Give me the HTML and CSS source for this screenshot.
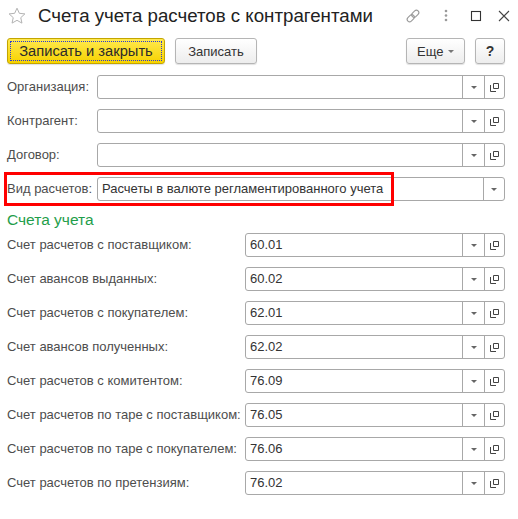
FILE: index.html
```html
<!DOCTYPE html>
<html lang="ru">
<head>
<meta charset="utf-8">
<title>Счета учета расчетов с контрагентами</title>
<link rel="stylesheet" href="styles.css">
</head>
<body>
<div class="window">
  <div class="titlebar">
    <svg class="star" width="18" height="18" viewBox="0 0 18 18"><path d="M9 1.2l2.35 5.1 5.55.6-4.15 3.75 1.2 5.45L9 13.3l-4.95 2.8 1.2-5.45L1.1 6.9l5.55-.6z" fill="none" stroke="#b3b3b3" stroke-width="1" stroke-linejoin="round"/></svg>
    <div class="title">Счета учета расчетов с контрагентами</div>
    <div class="title-icons">
      <svg class="ti-link" width="16" height="16" viewBox="0 0 16 16"><g transform="rotate(-45 8 8)" fill="none" stroke="#9a9a9a" stroke-width="1.1"><rect x="0.8" y="5.6" width="8" height="4.8" rx="2.4"/><rect x="7.2" y="5.6" width="8" height="4.8" rx="2.4"/></g></svg>
      <svg class="ti-dots" width="6" height="16" viewBox="0 0 6 16"><circle cx="3" cy="3" r="1.3" fill="#9a9a9a"/><circle cx="3" cy="7.5" r="1.3" fill="#9a9a9a"/><circle cx="3" cy="12" r="1.3" fill="#9a9a9a"/></svg>
      <svg class="ti-max" width="12" height="12" viewBox="0 0 12 12"><rect x="1.5" y="1.5" width="9" height="9" fill="none" stroke="#333" stroke-width="1.1"/></svg>
      <svg class="ti-close" width="12" height="12" viewBox="0 0 12 12"><path d="M1 1L11 11M11 1L1 11" stroke="#444" stroke-width="1.1"/></svg>
    </div>
  </div>

  <div class="toolbar">
    <button class="btn btn-primary"><span class="focus">Записать и закрыть</span></button>
    <button class="btn btn-save">Записать</button>
    <div class="spacer"></div>
    <button class="btn btn-more">Еще <i class="caret"></i></button>
    <button class="btn btn-help">?</button>
  </div>

  <div class="form">
    <div class="row">
      <div class="lbl lbl-top">Организация:</div>
      <div class="field field-top"><div class="val"></div><div class="dd"><i class="arrow"></i></div><div class="open"><svg width="9" height="9" viewBox="0 0 9 9"><path d="M3.5 0.5h5v5h-5z" fill="none" stroke="#444"/><path d="M0.5 2v6.5H6" fill="none" stroke="#444"/></svg></div></div>
    </div>
    <div class="row">
      <div class="lbl lbl-top">Контрагент:</div>
      <div class="field field-top"><div class="val"></div><div class="dd"><i class="arrow"></i></div><div class="open"><svg width="9" height="9" viewBox="0 0 9 9"><path d="M3.5 0.5h5v5h-5z" fill="none" stroke="#444"/><path d="M0.5 2v6.5H6" fill="none" stroke="#444"/></svg></div></div>
    </div>
    <div class="row">
      <div class="lbl lbl-top">Договор:</div>
      <div class="field field-top"><div class="val"></div><div class="dd"><i class="arrow"></i></div><div class="open"><svg width="9" height="9" viewBox="0 0 9 9"><path d="M3.5 0.5h5v5h-5z" fill="none" stroke="#444"/><path d="M0.5 2v6.5H6" fill="none" stroke="#444"/></svg></div></div>
    </div>
    <div class="row row-mark">
      <div class="lbl lbl-top">Вид расчетов:</div>
      <div class="field field-top"><div class="val">Расчеты в валюте регламентированного учета</div><div class="dd dd-last"><i class="arrow"></i></div></div>
      <div class="mark"></div>
    </div>

    <div class="section">Счета учета</div>

    <div class="row">
      <div class="lbl lbl-acc">Счет расчетов с поставщиком:</div>
      <div class="field field-acc"><div class="val">60.01</div><div class="dd"><i class="arrow"></i></div><div class="open"><svg width="9" height="9" viewBox="0 0 9 9"><path d="M3.5 0.5h5v5h-5z" fill="none" stroke="#444"/><path d="M0.5 2v6.5H6" fill="none" stroke="#444"/></svg></div></div>
    </div>
    <div class="row">
      <div class="lbl lbl-acc">Счет авансов выданных:</div>
      <div class="field field-acc"><div class="val">60.02</div><div class="dd"><i class="arrow"></i></div><div class="open"><svg width="9" height="9" viewBox="0 0 9 9"><path d="M3.5 0.5h5v5h-5z" fill="none" stroke="#444"/><path d="M0.5 2v6.5H6" fill="none" stroke="#444"/></svg></div></div>
    </div>
    <div class="row">
      <div class="lbl lbl-acc">Счет расчетов с покупателем:</div>
      <div class="field field-acc"><div class="val">62.01</div><div class="dd"><i class="arrow"></i></div><div class="open"><svg width="9" height="9" viewBox="0 0 9 9"><path d="M3.5 0.5h5v5h-5z" fill="none" stroke="#444"/><path d="M0.5 2v6.5H6" fill="none" stroke="#444"/></svg></div></div>
    </div>
    <div class="row">
      <div class="lbl lbl-acc">Счет авансов полученных:</div>
      <div class="field field-acc"><div class="val">62.02</div><div class="dd"><i class="arrow"></i></div><div class="open"><svg width="9" height="9" viewBox="0 0 9 9"><path d="M3.5 0.5h5v5h-5z" fill="none" stroke="#444"/><path d="M0.5 2v6.5H6" fill="none" stroke="#444"/></svg></div></div>
    </div>
    <div class="row">
      <div class="lbl lbl-acc">Счет расчетов с комитентом:</div>
      <div class="field field-acc"><div class="val">76.09</div><div class="dd"><i class="arrow"></i></div><div class="open"><svg width="9" height="9" viewBox="0 0 9 9"><path d="M3.5 0.5h5v5h-5z" fill="none" stroke="#444"/><path d="M0.5 2v6.5H6" fill="none" stroke="#444"/></svg></div></div>
    </div>
    <div class="row">
      <div class="lbl lbl-acc">Счет расчетов по таре с поставщиком:</div>
      <div class="field field-acc"><div class="val">76.05</div><div class="dd"><i class="arrow"></i></div><div class="open"><svg width="9" height="9" viewBox="0 0 9 9"><path d="M3.5 0.5h5v5h-5z" fill="none" stroke="#444"/><path d="M0.5 2v6.5H6" fill="none" stroke="#444"/></svg></div></div>
    </div>
    <div class="row">
      <div class="lbl lbl-acc">Счет расчетов по таре с покупателем:</div>
      <div class="field field-acc"><div class="val">76.06</div><div class="dd"><i class="arrow"></i></div><div class="open"><svg width="9" height="9" viewBox="0 0 9 9"><path d="M3.5 0.5h5v5h-5z" fill="none" stroke="#444"/><path d="M0.5 2v6.5H6" fill="none" stroke="#444"/></svg></div></div>
    </div>
    <div class="row">
      <div class="lbl lbl-acc">Счет расчетов по претензиям:</div>
      <div class="field field-acc"><div class="val">76.02</div><div class="dd"><i class="arrow"></i></div><div class="open"><svg width="9" height="9" viewBox="0 0 9 9"><path d="M3.5 0.5h5v5h-5z" fill="none" stroke="#444"/><path d="M0.5 2v6.5H6" fill="none" stroke="#444"/></svg></div></div>
    </div>
  </div>
</div>
</body>
</html>
```

FILE: styles.css
```css
* { box-sizing: border-box; }
html, body { margin: 0; padding: 0; background: #fff; }
body {
  font-family: "Liberation Sans", Arial, sans-serif;
  font-size: 13px;
  color: #4d4d4d;
}
.window { width: 518px; height: 519px; overflow: hidden; }

.titlebar {
  display: flex;
  align-items: center;
  height: 32px;
  padding-left: 8px;
}
.star { flex: none; display: block; margin-top: -1px; }
.title {
  margin-left: 12px;
  font-size: 18.7px;
  line-height: 32px;
  color: #222;
  white-space: nowrap;
  flex: none;
}
.title-icons {
  margin-left: auto;
  display: flex;
  align-items: center;
  padding-right: 8px;
}
.ti-link { display: block; margin-right: 22px; }
.ti-dots { display: block; margin-right: 21px; }
.ti-max { display: block; margin-right: 16px; }
.ti-close { display: block; }

.toolbar {
  display: flex;
  align-items: center;
  padding: 6px 13px 0 7px;
  gap: 10px;
  height: 32px;
}
.spacer { flex: 1; }
.btn {
  height: 26px;
  border: 1px solid #b5b5b5;
  border-radius: 3px;
  background: linear-gradient(#ffffff, #ededed);
  box-shadow: 0 1px 1px rgba(0,0,0,0.12);
  font-family: inherit;
  font-size: 13px;
  color: #333;
  padding: 0;
  margin: 0;
  cursor: default;
}
.btn-primary {
  width: 158px;
  padding: 2px;
  background: linear-gradient(#ffe94f, #f6d200);
  border-color: #c3a500;
  font-size: 14.7px;
  color: #2b2b2b;
}
.focus {
  display: flex;
  align-items: center;
  justify-content: center;
  height: 100%;
  border: 1px dotted #2a3bd6;
}
.btn-save { width: 82px; }
.btn-more {
  width: 59px;
  display: flex;
  align-items: center;
  padding-left: 10px;
}
.caret {
  display: inline-block;
  margin-left: 5px;
  width: 0; height: 0;
  border-left: 3px solid transparent;
  border-right: 3px solid transparent;
  border-top: 3px solid #777;
}
.btn-help { width: 30px; font-weight: bold; font-size: 14px; }

.form { padding: 11px 13px 0 7px; }
.row {
  display: flex;
  align-items: center;
  height: 24px;
  margin-bottom: 10px;
}
.row-mark { position: relative; }
.mark {
  position: absolute;
  left: -3px;
  top: -5px;
  width: 390px;
  height: 34px;
  border: 3px solid #f00;
  pointer-events: none;
}
.lbl { line-height: 24px; white-space: nowrap; flex: none; color: #4d4d4d; }
.lbl-top { width: 90px; }
.lbl-acc { width: 238px; }

.field {
  display: flex;
  height: 24px;
  border: 1px solid #a8a8a8;
  border-radius: 3px;
  background: #fff;
  flex: none;
}
.field-top { width: 408px; }
.field-acc { width: 260px; }
.val {
  flex: 1;
  padding-left: 4px;
  line-height: 22px;
  color: #333;
  white-space: nowrap;
  overflow: hidden;
}
.dd, .open {
  display: flex;
  align-items: center;
  justify-content: center;
  border-left: 1px solid #a8a8a8;
  flex: none;
}
.dd { width: 22px; }
.dd-last { width: 21px; }
.open { width: 20px; }
.open svg { display: block; }
.arrow {
  display: block;
  width: 0; height: 0;
  border-left: 3px solid transparent;
  border-right: 3px solid transparent;
  border-top: 3px solid #666;
}

.section {
  height: 22px;
  line-height: 18px;
  font-size: 15.5px;
  color: #1f9e4b;
}
```
